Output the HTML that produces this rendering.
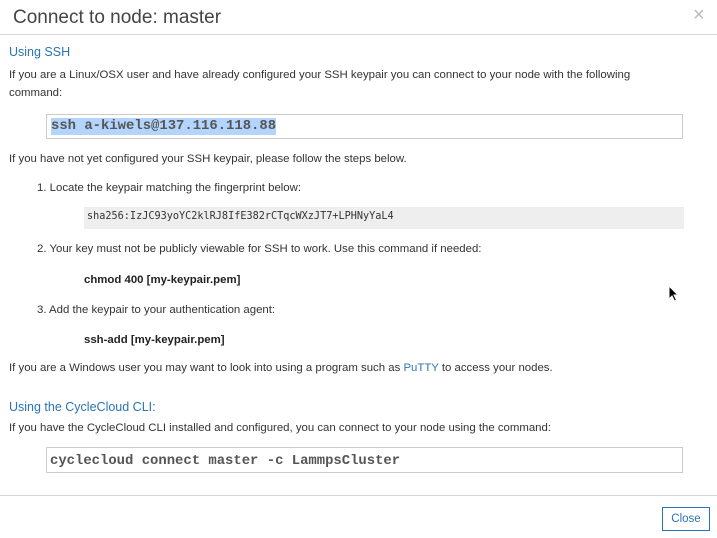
<!DOCTYPE html>
<html><head><style>
body{margin:0;width:717px;height:538px;background:#fff;font-family:"Liberation Sans",sans-serif;color:#333;position:relative;overflow:hidden}
.a{position:absolute;white-space:nowrap}
.t{font-size:11.4px;line-height:14px}
.h{font-size:12.5px;color:#2a74b5}
.line{position:absolute;left:0;width:717px;height:1px;background:#d6d6d6}
.box{position:absolute;border:1px solid #ccc;background:#fff}
.mono{font-family:"Liberation Mono",monospace;font-weight:bold;font-size:13.9px;color:#555}
b{color:#222}
</style></head><body>
<div class="a" style="left:13px;top:7px;font-size:19px;color:#444;font-weight:300">Connect to node: master</div>
<div class="a" style="left:693px;top:4px;font-size:20px;color:#bbb">×</div>
<div class="line" style="top:34px"></div>
<div class="a h" style="left:9px;top:45px">Using SSH</div>
<div class="a t" style="left:9px;top:68px">If you are a Linux/OSX user and have already configured your SSH keypair you can connect to your node with the following</div>
<div class="a t" style="left:9px;top:86px">command:</div>
<div class="box" style="left:46px;top:114px;width:635px;height:23px"></div>
<div class="a mono" style="left:51px;top:118px;background:#b3d4fc;line-height:17px">ssh a-kiwels@137.116.118.88</div>
<div class="a t" style="left:9px;top:152px">If you have not yet configured your SSH keypair, please follow the steps below.</div>
<div class="a t" style="left:37px;top:181px">1. Locate the keypair matching the fingerprint below:</div>
<div class="a" style="left:84px;top:207px;width:600px;height:22px;background:#eee"></div>
<div class="a" style="left:87px;top:211px;font-family:'DejaVu Sans Mono',monospace;font-size:10.2px;color:#333">sha256:IzJC93yoYC2klRJ8IfE382rCTqcWXzJT7+LPHNyYaL4</div>
<div class="a t" style="left:37px;top:242px">2. Your key must not be publicly viewable for SSH to work. Use this command if needed:</div>
<div class="a t" style="left:84px;top:273px"><b>chmod 400 [my-keypair.pem]</b></div>
<div class="a t" style="left:37px;top:303px">3. Add the keypair to your authentication agent:</div>
<div class="a t" style="left:84px;top:333px"><b>ssh-add [my-keypair.pem]</b></div>
<div class="a t" style="left:9px;top:361px">If you are a Windows user you may want to look into using a program such as <span style="color:#2a74b5">PuTTY</span> to access your nodes.</div>
<div class="a h" style="left:9px;top:400px">Using the CycleCloud CLI:</div>
<div class="a t" style="left:9px;top:421px">If you have the CycleCloud CLI installed and configured, you can connect to your node using the command:</div>
<div class="box" style="left:46px;top:447px;width:635px;height:24px"></div>
<div class="a mono" style="left:50px;top:453px">cyclecloud connect master -c LammpsCluster</div>
<div class="line" style="top:495px"></div>
<div class="a" style="left:662px;top:507px;width:46px;height:22px;border:1px solid #2a74b5;color:#2a74b5;font-size:11.5px;text-align:center;line-height:23px">Close</div>
<svg class="a" style="left:668px;top:285px" width="12" height="18" viewBox="0 0 12 18"><path d="M1 1 L1 14 L4 11 L6.5 16 L8.5 15 L6 10 L10 10 Z" fill="#000" stroke="#fff" stroke-width="1"/></svg>
</body></html>
